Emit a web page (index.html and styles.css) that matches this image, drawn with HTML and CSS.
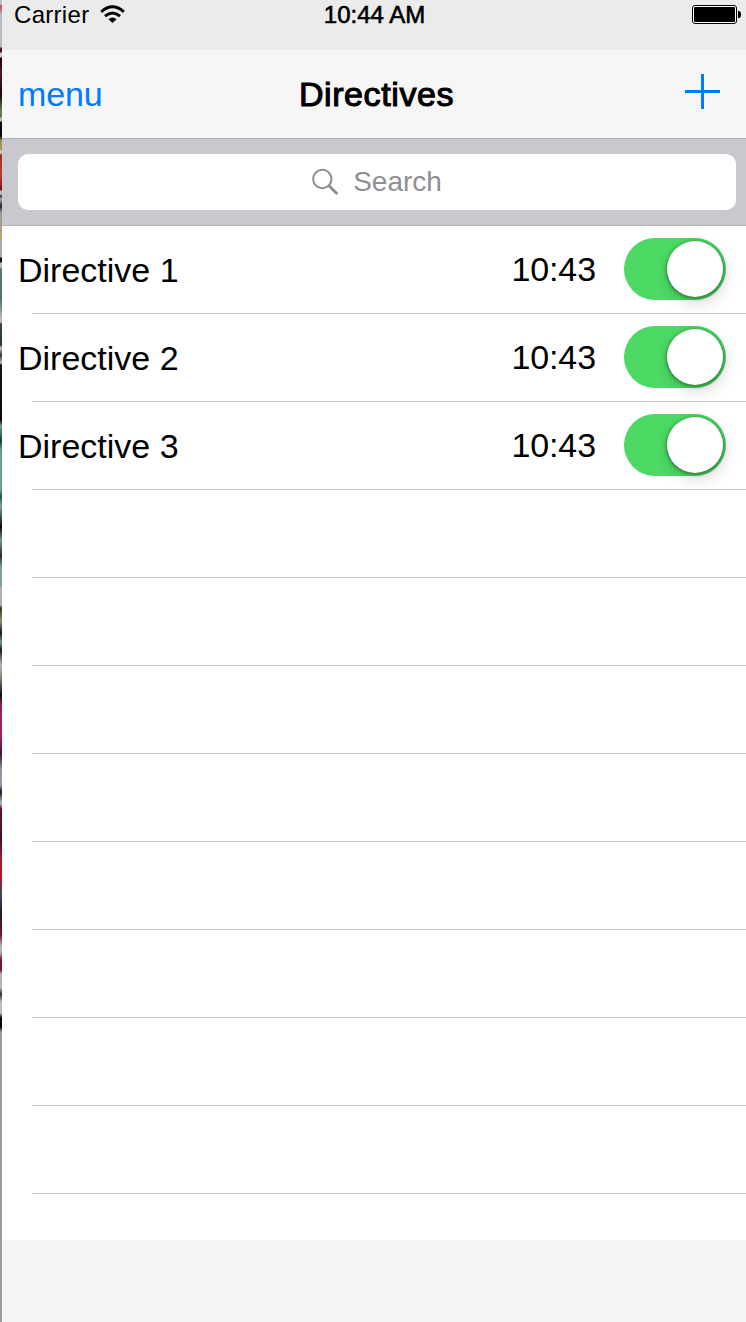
FILE: index.html
```html
<!DOCTYPE html>
<html lang="en">
<head>
<meta charset="utf-8">
<title>Directives</title>
<link rel="stylesheet" href="styles.css">
</head>
<body>
<div class="backdrop"></div>
<main class="phone">
  <div class="status">
    <div class="carrier"><span>Carrier</span>
      <svg class="wifi" width="26" height="20" viewBox="0 0 26 20"><g fill="none" stroke="#000" stroke-width="3"><path d="M1.2 6.800Q12.500-3.200 23.800 6.800"/><path d="M5 11.200Q12.500 4.800 20 11.200"/></g><path d="M8.400 14.200Q12.500 10.600 16.600 14.200L12.500 18Z"/></svg>
    </div>
    <span class="clock">10:44 AM</span>
    <svg class="battery" width="50" height="20" viewBox="0 0 50 20"><rect x=".5" y=".5" width="44" height="18" rx="2.500" fill="#fff" stroke="#000"/><rect x="2" y="2" width="41" height="15" rx="1"/><path d="M46 6h1.500q1.500 1 1.500 3.500t-1.500 3.500H46z"/></svg>
  </div>
  <header class="nav">
    <a class="menu">menu</a>
    <h1 class="title">Directives</h1>
    <svg class="add" width="35" height="35" viewBox="0 0 35 35"><path d="M16 0h3v16h16v3H19v16h-3V19H0v-3h16z" fill="#007aff"/></svg>
  </header>
  <div class="search">
    <div class="field">
      <svg class="lens" width="28" height="28" viewBox="0 0 28 28" fill="none" stroke="#8e8e93"><circle cx="10.300" cy="11" r="9.200" stroke-width="2"/><path d="M16.800 17.500l8.500 8.500" stroke-width="2.900"/></svg>
      <span>Search</span>
    </div>
  </div>
  <ul class="list">
    <li class="row"><span class="name">Directive 1</span><time class="time">10:43</time><span class="switch"><i class="knob"></i></span></li>
    <li class="row"><span class="name">Directive 2</span><time class="time">10:43</time><span class="switch"><i class="knob"></i></span></li>
    <li class="row"><span class="name">Directive 3</span><time class="time">10:43</time><span class="switch"><i class="knob"></i></span></li>
    <li class="row"></li><li class="row"></li><li class="row"></li><li class="row"></li>
    <li class="row"></li><li class="row"></li><li class="row"></li><li class="row"></li>
  </ul>
  <footer class="toolbar"></footer>
</main>
</body>
</html>
```
FILE: styles.css
```css
* { box-sizing: border-box; }
body {
  margin: 0;
  display: flex;
  width: 746px;
  height: 1322px;
  overflow: hidden;
  font-family: "Liberation Sans", Arial, sans-serif;
  color: #000;
}
.backdrop {
  width: 2px;
  background: linear-gradient(#b9c0c6 0 5px, #d54a59 5px 7px, #b3bec5 15px 47px, #5b1030 48px 52px, #ccc 53px 57px, #160008 58px, #5a1232 73px, #18080c 95px, #5f7d4a 110px 117px, #bbb 118px 121px, #080812 122px 136px, #a79553 141px 149px, #ccc 151px 153px, #a62a20 155px, #b8402c 175px, #701512 190px, #bbb 191px 194px, #333 196px, #aaa 199px, #222 206px, #999 213px, #c4a078 238px, #aaa 245px 257px, #201015 258px 262px, #bbb 263px 267px, #547773 269px, #4d7772 300px, #bbb 319px 322px, #34474a 324px, #253436 345px, #ccc 348px, #333 355px, #bbb 363px, #101716 365px, #050b0b 420px, #69a48d 426px, #14412f 441px, #6c9f8b 450px 490px, #205340 496px, #79a895 506px, #050707 527px, #739d8e 540px, #302728 556px, #78a591 567px 586px, #b4b0b2 588px 605px, #33361e 608px, #899078 621px, #101713 633px, #759b89 642px, #142019 650px, #aeb9aa 665px, #8b8778 677px, #110e12 695px, #93205a 705px, #ac1b60 735px, #431438 754px, #9297a8 770px 785px, #19142a 792px, #bbc 803px, #631035 809px, #451033 840px, #a0192a 858px, #a91720 878px, #37465b 895px, #26172a 915px, #77103a 935px, #bdafba 946px 952px, #77103a 960px 970px, #bbb0ba 974px 988px, #332d3c 994px, #bbb 1002px 1013px, #080508 1018px 1027px, #9b9b9b 1032px 1322px);
}
.phone {
  width: 744px;
  display: flex;
  flex-direction: column;
  background: #fff;
}
.status {
  height: 50px;
  display: grid;
  grid-template-columns: 1fr auto 1fr;
  align-items: start;
  padding: 0 4px 0 12px;
  background: #ebebeb;
  font-size: 24px;
  line-height: 30px;
}
.carrier { display: flex; gap: 11px; letter-spacing: .3px; }
.wifi { margin-top: 5px; }
.clock { -webkit-text-stroke: .6px #000; margin-right: 7px; }
.battery { justify-self: end; margin: 5px 0 0; }
.nav {
  height: 89px;
  display: grid;
  grid-template-columns: 1fr auto 1fr;
  align-items: center;
  padding: 0 26px 0 16px;
  border-bottom: 1px solid #b2b2b4;
  background: #f6f6f6;
  font-size: 34px;
  line-height: 40px;
}
.menu { color: #007aff; letter-spacing: -.1px; }
.title {
  margin: 0 0 0 15px;
  font-size: 34px;
  font-weight: 400;
  letter-spacing: .6px;
  -webkit-text-stroke: 1.1px #000;
}
.add { justify-self: end; margin-bottom: 5px; }
.search {
  height: 87px;
  padding: 15px 10px 15px 16px;
  background: #c9c8ce;
  border-bottom: 1px solid #b2b2b4;
}
.field {
  height: 56px;
  display: flex;
  align-items: center;
  justify-content: center;
  gap: 13px;
  border-radius: 10px;
  background: #fff;
  color: #8e8e93;
  font-size: 28px;
}
.list { margin: 0; padding: 0; list-style: none; height: 1014px; }
.row {
  height: 88px;
  display: flex;
  align-items: center;
  padding: 0 20px 2px 16px;
  font-size: 34px;
  background: linear-gradient(#c8c7cc, #c8c7cc) 30px 100% / 100% 1px no-repeat;
}
.name { flex: 1; padding-top: 3px; }
.time { margin-right: 28px; letter-spacing: -.1px; }
.switch {
  width: 102px;
  height: 62px;
  padding: 3px;
  display: flex;
  justify-content: flex-end;
  border-radius: 31px;
  background: #4cd964;
}
.knob {
  width: 56px;
  height: 56px;
  border-radius: 50%;
  background: #fff;
  box-shadow: 0 1px 4px rgba(0, 0, 0, .5), 2px 6px 16px rgba(0, 0, 0, .15);
}
.toolbar { flex: 1; background: #f5f5f5; }
```
